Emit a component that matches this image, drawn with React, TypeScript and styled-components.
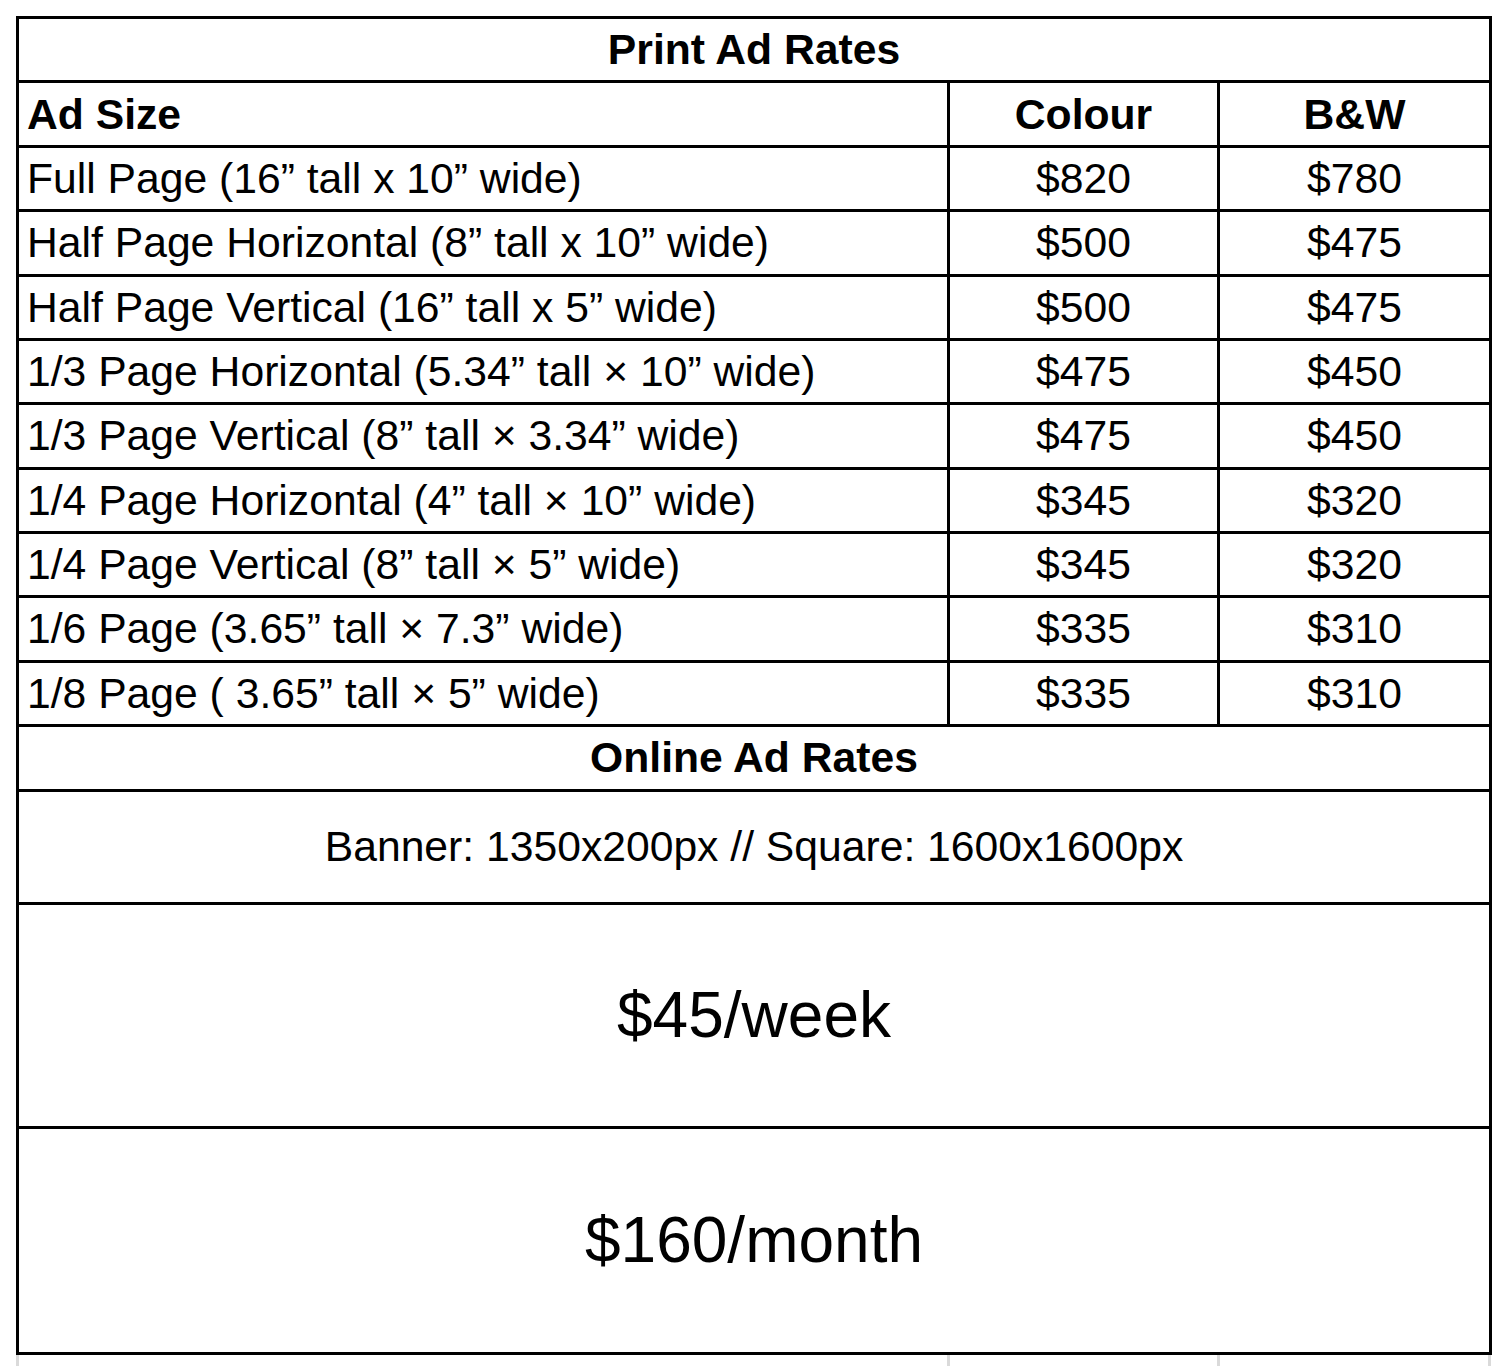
import React from 'react';
import styled, { createGlobalStyle } from 'styled-components';

const GlobalStyle = createGlobalStyle`
    html, body {
        margin: 0;
        padding: 0;
        background: #fff;
    }
    body {
        font-family: 'Liberation Sans', Arial, sans-serif;
        color: #000;
    }
`;

const Page = styled.div`
    padding: 16px 0 0 16px;
`;

const Sheet = styled.div`
    width: 1476px;
    box-sizing: border-box;
    border: 3px solid #000;
    background: #fff;
`;

// $h is the content height; the 3px top rule is added on top of it
const Row: any = styled.div<{ $h: number; $cols?: boolean }>`
    display: grid;
    grid-template-columns: ${(p) => (p.$cols ? '928px 270px 272px' : '1fr')};
    height: ${(p) => p.$h}px;
    & + & {
        border-top: 3px solid #000;
    }
`;

const Cell: any = styled.div<{ $align?: string; $bold?: boolean; $size?: number; $divider?: boolean }>`
    display: flex;
    align-items: center;
    justify-content: ${(p) => (p.$align === 'left' ? 'flex-start' : 'center')};
    box-sizing: border-box;
    padding: 0 8px;
    border-left: ${(p) => (p.$divider ? '3px solid #000' : 'none')};
    font-size: ${(p) => p.$size || 42.67}px;
    font-weight: ${(p) => (p.$bold ? 700 : 400)};
    white-space: pre;
    overflow: hidden;
`;

const Tail = styled.div`
    display: grid;
    grid-template-columns: 931px 270px 271px 3px;
    width: 1476px;
    height: 12px;
`;

const TailLine = styled.div`
    border-left: 3px solid #dadada;
`;

interface IRate {
    size: string;
    colour: string;
    bw: string;
}

const rates: IRate[] = [
    { size: 'Full Page (16\u201D tall x 10\u201D wide)', colour: '$820', bw: '$780' },
    { size: 'Half Page Horizontal (8\u201D tall x 10\u201D wide)', colour: '$500', bw: '$475' },
    { size: 'Half Page Vertical (16\u201D tall x 5\u201D wide)', colour: '$500', bw: '$475' },
    { size: '1/3 Page Horizontal (5.34\u201D tall \u00D7 10\u201D wide)', colour: '$475', bw: '$450' },
    { size: '1/3 Page Vertical (8\u201D tall \u00D7 3.34\u201D wide)', colour: '$475', bw: '$450' },
    { size: '1/4 Page Horizontal (4\u201D tall \u00D7 10\u201D wide)', colour: '$345', bw: '$320' },
    { size: '1/4 Page Vertical (8\u201D tall \u00D7 5\u201D wide)', colour: '$345', bw: '$320' },
    { size: '1/6 Page (3.65\u201D tall \u00D7 7.3\u201D wide)', colour: '$335', bw: '$310' },
    { size: '1/8 Page ( 3.65\u201D tall \u00D7 5\u201D wide)', colour: '$335', bw: '$310' },
];

const App = () => {
    return (
        <Page>
            <GlobalStyle />
            <Sheet>
                <Row $h={61}>
                    <Cell $bold>Print Ad Rates</Cell>
                </Row>
                <Row $h={62} $cols>
                    <Cell $bold $align='left'>Ad Size</Cell>
                    <Cell $bold $divider>Colour</Cell>
                    <Cell $bold $divider>B&amp;W</Cell>
                </Row>
                {rates.map((rate, i) => (
                    <Row key={i} $h={61.33} $cols>
                        <Cell $align='left'>{rate.size}</Cell>
                        <Cell $divider>{rate.colour}</Cell>
                        <Cell $divider>{rate.bw}</Cell>
                    </Row>
                ))}
                <Row $h={62}>
                    <Cell $bold>Online Ad Rates</Cell>
                </Row>
                <Row $h={110}>
                    <Cell>Banner: 1350x200px // Square: 1600x1600px</Cell>
                </Row>
                <Row $h={221}>
                    <Cell $size={64}>$45/week</Cell>
                </Row>
                <Row $h={223}>
                    <Cell $size={64}>$160/month</Cell>
                </Row>
            </Sheet>
            <Tail>
                <TailLine />
                <TailLine />
                <TailLine />
                <TailLine />
            </Tail>
        </Page>
    );
};

export default App;
